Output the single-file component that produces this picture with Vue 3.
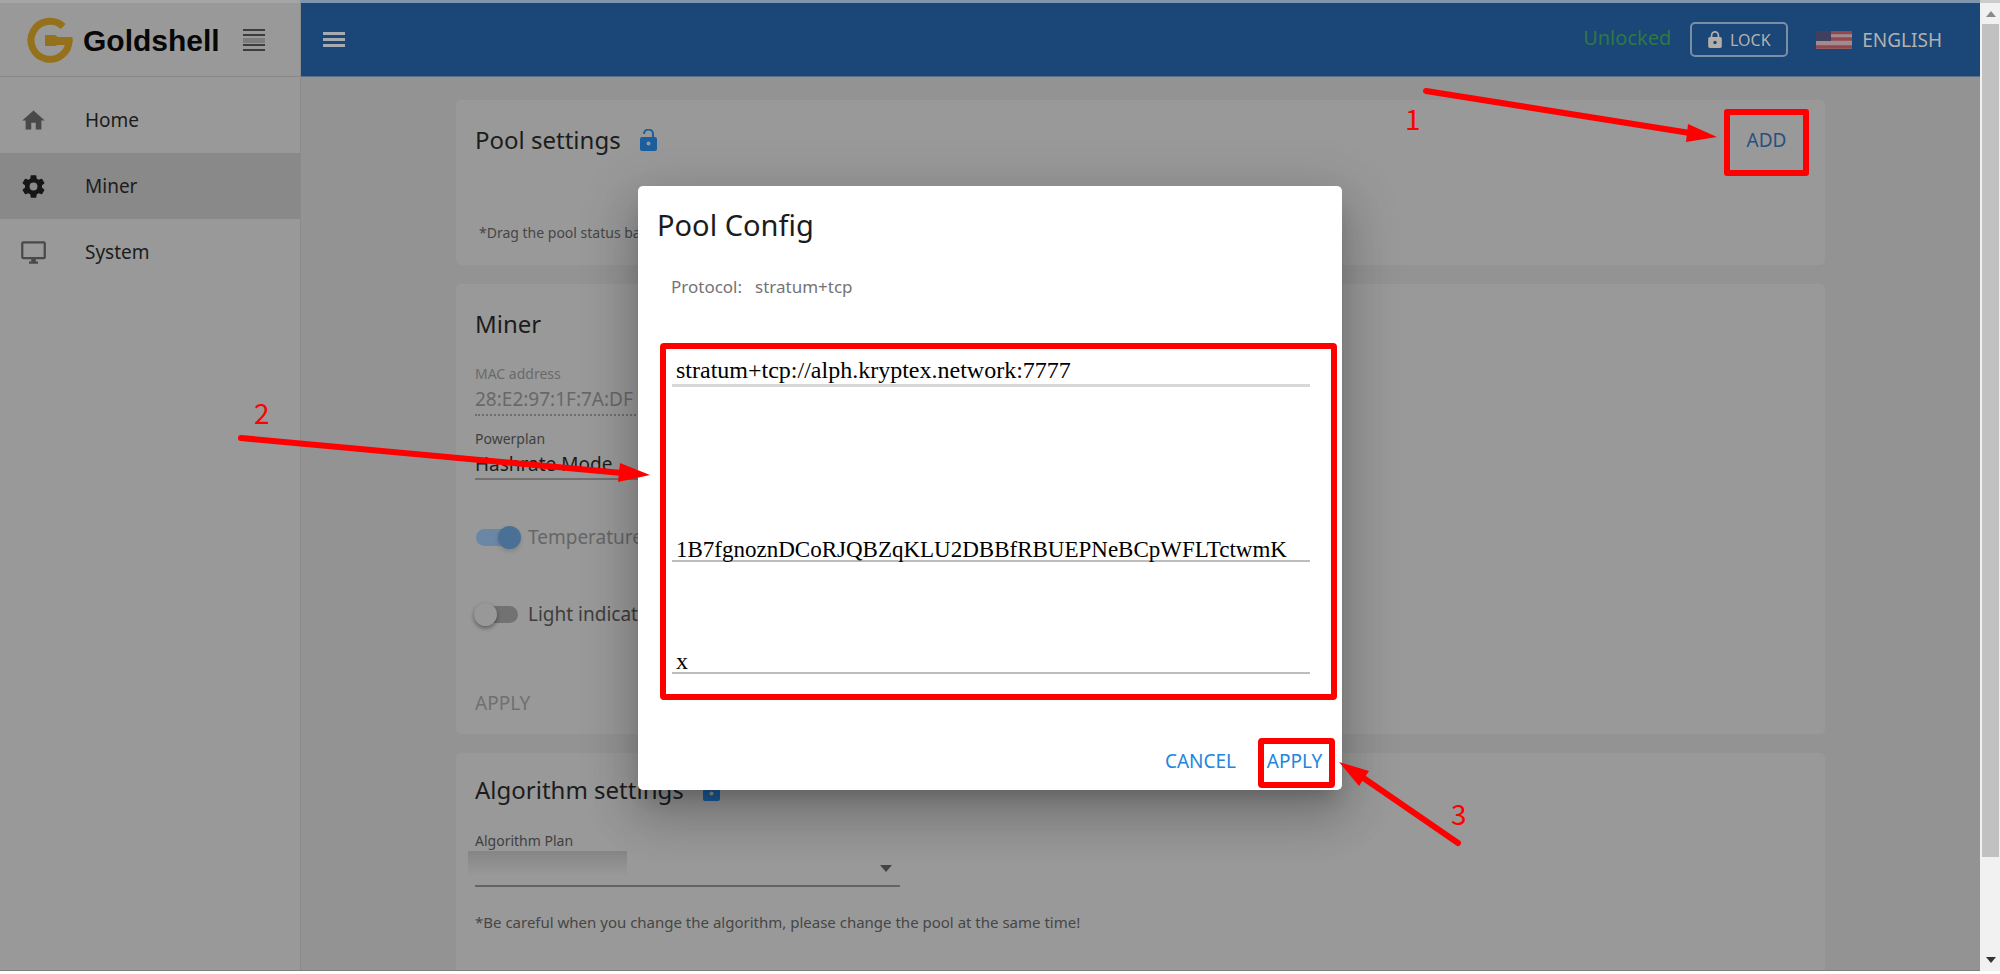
<script setup>
import { ref } from 'vue'

const nav = [
  { label: 'Home', icon: 'home' },
  { label: 'Miner', icon: 'gear', active: true },
  { label: 'System', icon: 'monitor' },
]
const mac = ref('28:E2:97:1F:7A:DF')
const plan = ref('Hashrate Mode')
const algorithm = ref('')
const temperature = ref(true)
const light = ref(false)
const poolUrl = ref('stratum+tcp://alph.kryptex.network:7777')
const poolUser = ref('1B7fgnoznDCoRJQBZqKLU2DBBfRBUEPNeBCpWFLTctwmK')
const poolPass = ref('x')
</script>

<template>
  <div class="window">
    <div class="top-edge"></div>
    <div class="viewport">
      <div class="page">
        <aside class="sidebar">
          <div class="brand">
            <svg class="logo" viewBox="0 0 46 46" aria-hidden="true">
              <path d="M36.2 9.6A19 19 0 1 0 42 22.5" fill="none" stroke="#94711a" stroke-width="7" />
              <path d="M18 18h10l3 2h14.5v5.500l-4 2.500H31l-3 1H18z" fill="#94711a" />
            </svg>
            <span class="wordmark">Goldshell</span>
            <svg class="lines" viewBox="0 0 22 22" aria-hidden="true">
              <path d="M0 9h22v5H0z" fill="#7c7c7c" />
              <path d="M0 1h22M0 6h22M0 16h22M0 21h22" stroke="#3c3c3c" stroke-width="2" />
            </svg>
          </div>
          <nav class="nav">
            <a v-for="item in nav" :key="item.label" href="#" class="nav-item" :class="{ active: item.active }">
              <svg viewBox="0 0 24 24" aria-hidden="true">
                <path v-if="item.icon === 'home'" d="M10 20v-6h4v6h5v-8h3L12 3 2 12h3v8z" />
                <path
                  v-else-if="item.icon === 'gear'"
                  d="M12 15.500A3.500 3.500 0 0 1 8.500 12 3.500 3.500 0 0 1 12 8.500a3.500 3.500 0 0 1 3.500 3.500 3.500 3.500 0 0 1-3.500 3.500m7.430-2.530c.04-.32.07-.64.07-.97s-.03-.66-.07-1l2.110-1.630c.19-.15.24-.42.12-.64l-2-3.460c-.12-.22-.39-.31-.61-.22l-2.490 1c-.52-.39-1.060-.73-1.690-.98l-.37-2.650A.506.506 0 0 0 14 2h-4c-.25 0-.46.18-.5.42l-.37 2.650c-.63.25-1.170.59-1.690.98l-2.490-1c-.22-.09-.49 0-.61.22l-2 3.460c-.13.22-.07.49.12.64L4.570 11c-.04.34-.07.67-.07 1s.03.65.07.97l-2.110 1.660c-.19.15-.25.42-.12.64l2 3.460c.12.22.39.3.61.22l2.490-1.010c.52.4 1.060.74 1.690.99l.37 2.650c.04.24.25.42.5.42h4c.25 0 .46-.18.5-.42l.37-2.650c.63-.26 1.170-.59 1.690-.99l2.490 1.010c.22.08.49 0 .61-.22l2-3.460c.12-.22.07-.49-.12-.64z"
                />
                <path
                  v-else
                  d="M21 16H3V4h18m0-2H3c-1.110 0-2 .89-2 2v12a2 2 0 0 0 2 2h7v2H8v2h8v-2h-2v-2h7a2 2 0 0 0 2-2V4a2 2 0 0 0-2-2"
                />
              </svg>
              <span>{{ item.label }}</span>
            </a>
          </nav>
        </aside>

        <div class="content">
          <header class="appbar">
            <button class="burger" aria-label="Toggle menu"><i></i><i></i><i></i></button>
            <span class="status">Unlocked</span>
            <button class="lock">
              <svg viewBox="0 0 16 20" aria-hidden="true">
                <path d="M4 8V5a4 4 0 0 1 8 0v3" fill="none" stroke="#b3afa8" stroke-width="2" />
                <path d="M2 7h12a2 2 0 0 1 2 2v9a2 2 0 0 1-2 2H2a2 2 0 0 1-2-2V9a2 2 0 0 1 2-2z" fill="#b3afa8" />
                <circle cx="8" cy="13.500" r="2" fill="#1a4678" />
              </svg>
              LOCK
            </button>
            <button class="lang">
              <svg viewBox="0 0 36 18" aria-hidden="true">
                <path d="M0 0h36v18H0z" fill="#a08c90" />
                <path d="M0 1.500h36M0 8h36M0 16h36" stroke="#93484e" stroke-width="3.500" />
                <path d="M0 0h15v10H0z" fill="#403f60" />
              </svg>
              ENGLISH
            </button>
          </header>

          <main class="main">
            <section class="card pool">
              <div class="card-head">
                <h2>Pool settings</h2>
                <svg class="open-lock" viewBox="0 0 17 22" aria-hidden="true">
                  <path d="M4 5a4.500 4.500 0 0 1 9 0v4" fill="none" stroke="#1b5f9e" stroke-width="2" />
                  <path d="M2 8h13a2 2 0 0 1 2 2v10a2 2 0 0 1-2 2H2a2 2 0 0 1-2-2V10a2 2 0 0 1 2-2z" fill="#1b5f9e" />
                  <circle cx="8.500" cy="14.500" r="2" fill="#999" />
                </svg>
                <button class="add">ADD</button>
              </div>
              <p class="note drag">*Drag the pool status bar</p>
            </section>

            <section class="card miner">
              <h2>Miner</h2>
              <label class="label muted" for="mac">MAC address</label>
              <input id="mac" v-model="mac" class="value mac" disabled />
              <label class="label plan-label" for="plan">Powerplan</label>
              <select id="plan" v-model="plan" class="value plan">
                <option>Hashrate Mode</option>
              </select>
              <label class="switch first muted">
                <input v-model="temperature" type="checkbox" role="switch" disabled />
                Temperature control
              </label>
              <label class="switch">
                <input v-model="light" type="checkbox" role="switch" />
                Light indicator
              </label>
              <button class="apply" disabled>APPLY</button>
            </section>

            <section class="card algo">
              <div class="card-head">
                <h2>Algorithm settings</h2>
                <svg class="open-lock" viewBox="0 0 17 22" aria-hidden="true">
                  <path d="M4 5a4.500 4.500 0 0 1 9 0v4" fill="none" stroke="#1b5f9e" stroke-width="2" />
                  <path d="M2 8h13a2 2 0 0 1 2 2v10a2 2 0 0 1-2 2H2a2 2 0 0 1-2-2V10a2 2 0 0 1 2-2z" fill="#1b5f9e" />
                  <circle cx="8.500" cy="14.500" r="2" fill="#999" />
                </svg>
              </div>
              <label class="label" for="algorithm">Algorithm Plan</label>
              <div class="select-wrap">
                <select id="algorithm" v-model="algorithm" class="value">
                  <option value=""></option>
                </select>
                <svg viewBox="0 0 12 7" aria-hidden="true"><path d="M0 0h12L6 7z" fill="#444" /></svg>
              </div>
              <p class="note">*Be careful when you change the algorithm, please change the pool at the same time!</p>
            </section>
          </main>
        </div>

        <div class="overlay">
          <div class="dialog" role="dialog" aria-labelledby="dialog-title">
            <h1 id="dialog-title">Pool Config</h1>
            <p class="protocol"><span>Protocol:</span><span>stratum+tcp</span></p>
            <div class="fields">
              <div class="field url"><input v-model="poolUrl" aria-label="Pool address" /></div>
              <div class="field user"><input v-model="poolUser" aria-label="User" /></div>
              <div class="field pass"><input v-model="poolPass" aria-label="Password" /></div>
            </div>
            <div class="actions">
              <button class="action">CANCEL</button>
              <button class="action confirm">APPLY</button>
            </div>
          </div>
        </div>

        <svg class="notes" aria-hidden="true">
          <g stroke="#f00" stroke-width="6" stroke-linecap="round">
            <path d="M1426 88L1690 130" />
            <path d="M241 435L622 470" />
            <path d="M1458 840L1362 774" />
          </g>
          <g fill="#f00">
            <path d="M1717 134L1688 121L1686 139Z" />
            <path d="M650 472L620 460L618 479Z" />
            <path d="M1339 759L1369 768L1359 783Z" />
            <text x="1405" y="127">1</text>
            <text x="254" y="421">2</text>
            <text x="1451" y="822">3</text>
          </g>
        </svg>
      </div>

      <div class="scrollbar" aria-hidden="true">
        <svg viewBox="0 0 10 6"><path d="M0 6h10L5 0z" fill="#8a8a8a" /></svg>
        <div class="track"><div class="thumb"></div></div>
        <svg viewBox="0 0 10 6"><path d="M0 0h10L5 6z" fill="#333" /></svg>
      </div>
    </div>
  </div>
</template>

<style>
body {
  margin: 0;
  background: #fff;
}
</style>

<style scoped>
* {
  box-sizing: border-box;
}
.window {
  height: 100vh;
  display: flex;
  flex-direction: column;
  padding-bottom: 3px;
  overflow: hidden;
  font-family: 'Noto Sans', 'Open Sans', sans-serif;
  color: #1c1c1c;
}
h1,
h2,
p {
  margin: 0;
  font-weight: 400;
}
button,
input,
select {
  font: inherit;
  color: inherit;
  background: none;
  border: 0;
  border-radius: 0;
  padding: 0;
  margin: 0;
  outline: 0;
  appearance: none;
}
.top-edge {
  height: 3px;
  flex: none;
  background: linear-gradient(90deg, #a5a5a5 300px, #8095ae 300px, #8095ae calc(100% - 20px), #ccc 0);
}
.viewport {
  flex: 1;
  min-height: 0;
  display: flex;
}
.page {
  position: relative;
  flex: 1;
  min-width: 0;
  display: flex;
  overflow: hidden;
  background: #939393;
  border-bottom: 1px solid #808080;
}
.sidebar {
  width: 301px;
  flex: none;
  background: #999;
  border-right: 1px solid #8b8b8b;
}
.brand {
  height: 74px;
  display: flex;
  align-items: center;
  padding-left: 27px;
  border-bottom: 1px solid #888;
}
.logo {
  width: 46px;
  height: 46px;
}
.wordmark {
  margin: 2px 23px 0 10px;
  font: bold 30px 'Liberation Sans', Arial, sans-serif;
  color: #080808;
}
.lines {
  width: 22px;
  height: 22px;
}
.nav {
  padding-top: 10px;
}
.nav-item {
  height: 66px;
  display: flex;
  align-items: center;
  gap: 38px;
  padding-left: 20px;
  font-size: 19px;
  color: #1c1c1c;
  text-decoration: none;
}
.nav-item svg {
  width: 27px;
  height: 27px;
  fill: #494949;
}
.nav-item.active {
  background: #898989;
}
.nav-item.active svg {
  fill: #161616;
}
.content {
  flex: 1;
  min-width: 0;
}
.appbar {
  height: 74px;
  display: flex;
  align-items: center;
  padding: 0 38px 0 22px;
  background: #1a4678;
  border-bottom: 1px solid #5a6f88;
  color: #b4b2ae;
}
.burger {
  width: 22px;
  display: flex;
  flex-direction: column;
  gap: 3px;
  margin: 0 auto 0 0;
}
.burger i {
  height: 3px;
  background: #a6abb1;
}
.status {
  padding-bottom: 4px;
  font-size: 20px;
  color: #2e7846;
}
.lock {
  display: flex;
  align-items: center;
  justify-content: center;
  gap: 8px;
  width: 98px;
  height: 35px;
  margin: 0 28px 0 19px;
  border: 2px solid #7a8ea6;
  border-radius: 5px;
  font-size: 16px;
}
.lock svg {
  width: 14px;
  height: 17px;
}
.lang {
  display: flex;
  align-items: center;
  gap: 10px;
  font-size: 19px;
}
.lang svg {
  width: 36px;
  height: 18px;
}
.main {
  display: flex;
  flex-direction: column;
  gap: 19px;
  max-width: 1417px;
  margin: 0 auto;
  padding: 23px 24px 0;
}
.card {
  display: flex;
  flex-direction: column;
  align-items: flex-start;
  padding: 20px 19px;
  border-radius: 5px;
  background: #999;
}
.card h2 {
  font-size: 24px;
  line-height: 40px;
}
.card-head {
  align-self: stretch;
  display: flex;
  align-items: center;
  gap: 19px;
}
.open-lock {
  width: 17px;
  height: 22px;
}
.add {
  width: 85px;
  height: 67px;
  margin: -11px -3px -16px auto;
  padding-bottom: 5px;
  border: 6px solid #f00;
  border-radius: 3px;
  font-size: 19px;
  color: #27517f;
}
.note {
  font-size: 14px;
  line-height: 24px;
  color: #464646;
}
.pool .note {
  margin: 61px 0 0 4px;
}
.label {
  font-size: 14px;
  line-height: 20px;
  color: #404040;
}
.label.muted {
  margin-top: 20px;
  color: #6a6a6a;
}
.value {
  width: 425px;
  height: 32px;
  border-bottom: 2px solid #5f5f5f;
  font-size: 19px;
}
.mac {
  color: #686868;
  border-bottom: 2px dotted #6e6e6e;
}
.plan-label {
  margin-top: 13px;
}
.plan {
  height: 31px;
  border-color: #707070;
}
.switch {
  display: flex;
  align-items: center;
  gap: 10px;
  height: 30px;
  margin-top: 47px;
  font-size: 19px;
  color: #3d3d3d;
}
.switch.first {
  margin-top: 42px;
  color: #666;
}
.switch input {
  position: relative;
  width: 42px;
  height: 17px;
  margin-left: 1px;
  border-radius: 9px;
  background: #727272;
}
.switch input::after {
  content: '';
  position: absolute;
  top: -3px;
  left: -2px;
  width: 23px;
  height: 23px;
  border-radius: 50%;
  background: #989898;
  box-shadow: 0 2px 4px rgba(0, 0, 0, 0.4);
}
.switch input:checked {
  background: #6a87a5;
}
.switch input:checked::after {
  left: 22px;
  background: #4a7095;
  box-shadow: 0 2px 4px rgba(0, 0, 0, 0.15);
}
.apply {
  height: 30px;
  margin-top: 59px;
  margin-bottom: -4px;
  font-size: 19px;
  color: #707070;
}
.algo {
  height: 320px;
  padding-top: 17px;
}
.algo .label {
  margin-top: 21px;
}
.select-wrap {
  display: flex;
  align-items: center;
  width: 425px;
  border-bottom: 2px solid #646464;
}
.select-wrap select {
  height: 34px;
  margin-left: -7px;
  padding-left: 7px;
  width: 432px;
  flex: none;
  background: linear-gradient(#858585, #999) left top / 159px 25px no-repeat;
  border-bottom: 0;
}
.select-wrap svg {
  width: 12px;
  height: 7px;
  margin-left: -20px;
}
.algo .note {
  margin-top: 23px;
  font-size: 15px;
}
.overlay {
  position: absolute;
  inset: 0;
  display: flex;
  align-items: center;
  justify-content: center;
  padding-top: 2px;
}
.dialog {
  width: 704px;
  padding: 19px 5px 2px 22px;
  border-radius: 5px;
  background: #fff;
  box-shadow:
    0 13px 18px -8px rgba(0, 0, 0, 0.2),
    0 29px 46px 4px rgba(0, 0, 0, 0.14),
    0 11px 55px 10px rgba(0, 0, 0, 0.12);
}
.dialog h1 {
  margin-left: -3px;
  font-size: 29px;
  line-height: 40px;
}
.protocol {
  display: flex;
  gap: 13px;
  margin: 30px 0 44px 11px;
  font-size: 17px;
  line-height: 24px;
  color: #747474;
}
.fields {
  border: 6px solid #f00;
  border-radius: 4px;
  padding: 0 21px 20px 6px;
}
.field {
  display: flex;
  align-items: flex-end;
  height: 30px;
  border-bottom: 2px solid #bdbdbd;
}
.field input {
  width: 100%;
  height: 28px;
  margin-bottom: -4px;
  padding-left: 4px;
  font: 23px 'Liberation Serif', 'Times New Roman', serif;
  color: #000;
}
.url {
  height: 38px;
  border-bottom: 3px solid #d8d8d8;
}
.url input {
  margin-bottom: -1px;
  font-size: 24px;
}
.user {
  margin-top: 145px;
}
.pass {
  margin-top: 82px;
}
.pass input {
  font-size: 24px;
}
.actions {
  display: flex;
  justify-content: flex-end;
  gap: 22px;
  margin: 38px 2px 0 0;
  font-size: 19px;
  color: #2186dc;
}
.action {
  padding-bottom: 3px;
}
.confirm {
  width: 77px;
  height: 50px;
  padding-right: 4px;
  border: 6px solid #f00;
  border-radius: 4px;
}
.notes {
  position: absolute;
  top: 0;
  left: 0;
  width: 100%;
  height: 100%;
  pointer-events: none;
  font: 28px 'Noto Sans CJK SC', sans-serif;
}
.scrollbar {
  width: 20px;
  flex: none;
  display: flex;
  flex-direction: column;
  align-items: center;
  padding: 8px 1px 8px 2px;
  background: #f1f1f1;
}
.scrollbar svg {
  width: 10px;
  height: 6px;
}
.track {
  flex: 1;
  align-self: stretch;
  margin: 7px 0;
}
.thumb {
  height: 90%;
  background: #c1c1c1;
}
</style>
